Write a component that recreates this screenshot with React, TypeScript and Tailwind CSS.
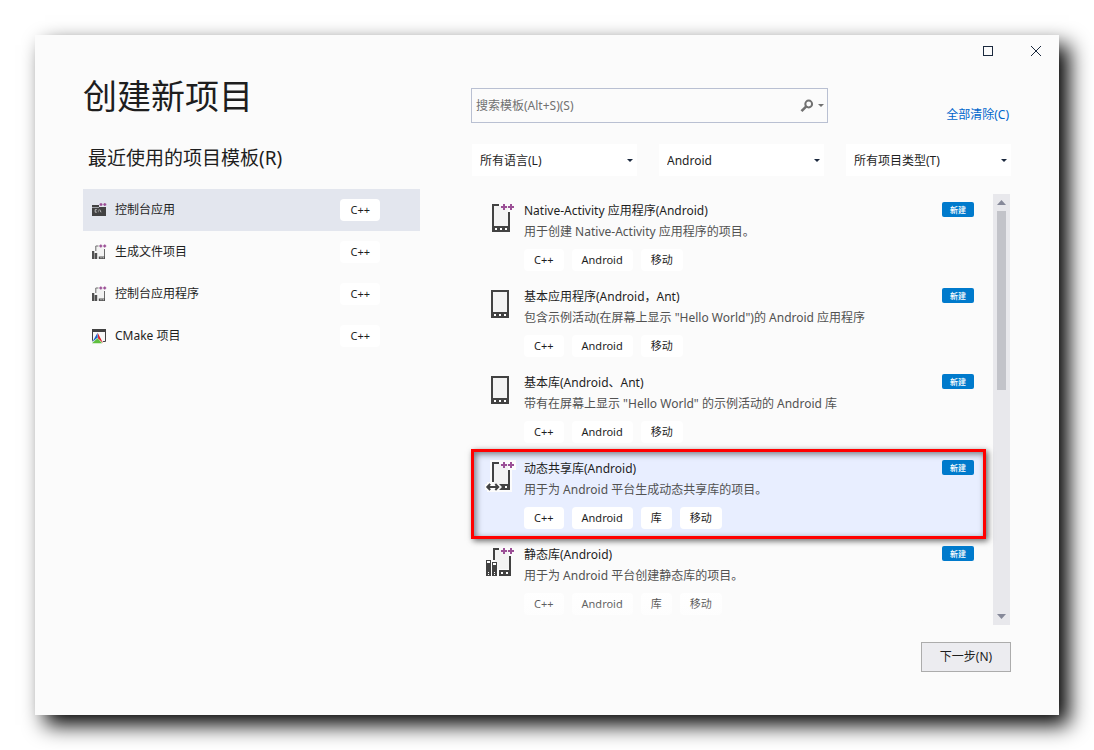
import React from "react";

type Kind = "native" | "phone" | "shared" | "static";

const recent = [
  { name: "控制台应用", icon: "console", selected: true },
  { name: "生成文件项目", icon: "makefile", selected: false },
  { name: "控制台应用程序", icon: "makefile", selected: false },
  { name: "CMake 项目", icon: "cmake", selected: false },
];

const templates: { title: string; desc: string; tags: string[]; kind: Kind; selected?: boolean }[] = [
  { title: "Native-Activity 应用程序(Android)", desc: "用于创建 Native-Activity 应用程序的项目。", tags: ["C++", "Android", "移动"], kind: "native" },
  { title: "基本应用程序(Android，Ant)", desc: "包含示例活动(在屏幕上显示 \"Hello World\")的 Android 应用程序", tags: ["C++", "Android", "移动"], kind: "phone" },
  { title: "基本库(Android、Ant)", desc: "带有在屏幕上显示 \"Hello World\" 的示例活动的 Android 库", tags: ["C++", "Android", "移动"], kind: "phone" },
  { title: "动态共享库(Android)", desc: "用于为 Android 平台生成动态共享库的项目。", tags: ["C++", "Android", "库", "移动"], kind: "shared", selected: true },
  { title: "静态库(Android)", desc: "用于为 Android 平台创建静态库的项目。", tags: ["C++", "Android", "库", "移动"], kind: "static" },
];

function PlusPlus() {
  return <path d="M16 6h2V4h2v2h2v2h-2v2h-2V8h-2zM23 6h2V4h2v2h2v2h-2v2h-2V8h-2z" fill="#9b4f96" />;
}

function TemplateIcon({ kind }: { kind: Kind }) {
  return (
    <svg width="32" height="34" viewBox="0 0 32 34" shapeRendering="crispEdges" aria-hidden="true" className="shrink-0">
      {kind === "phone" && (
        <>
          <path d="M6 4h18v28H6z" fill="#424242" />
          <path d="M8 6h14v20H8z" fill="#f3f3f3" />
          <path d="M9 28h2v2H9zM14 28h2v2h-2zM19 28h2v2h-2z" fill="#fff" />
        </>
      )}
      {kind === "native" && (
        <>
          <path d="M9 6h14v20H9z" fill="#f3f3f3" />
          <path d="M7 4h7v2H9v20h14V12h2v20H7z" fill="#424242" />
          <path d="M10 28h2v2h-2zM15 28h2v2h-2zM20 28h2v2h-2z" fill="#fff" />
          <PlusPlus />
        </>
      )}
      {kind === "shared" && (
        <>
          <path d="M5 2h26v10h-4v22H2v-2H0v-6h2v-2h3z" fill="#fcfcfc" />
          <path d="M9 6h14v20H9z" fill="#f3f3f3" />
          <path d="M7 4h7v2H9v18H7zM23 12h2v14h-2z" fill="#424242" />
          <g shapeRendering="geometricPrecision">
            <path d="M14 26h11v6H14l3-3z" fill="#424242" />
            <path d="M5.200 26L2.300 29l2.900 3M10.300 26l2.900 3-2.900 3M3 29h10" stroke="#424242" strokeWidth="2" fill="none" />
          </g>
          <path d="M20 28h2v2h-2z" fill="#fff" />
          <PlusPlus />
        </>
      )}
      {kind === "static" && (
        <>
          <path d="M10 6h14v19H10z" fill="#f3f3f3" />
          <path d="M8 4h6v2h-4v10H8zM24 12h2v20H14v-6h10z" fill="#424242" />
          <path d="M16 28h2v2h-2zM21 28h2v2h-2z" fill="#fff" />
          <path d="M1 16h5v16H1zM7 18h5v14H7z" fill="#424242" />
          <path d="M2 17h3v2H2zM8 19h3v2H8zM3 28h1v1H3zM9 28h1v1H9zM3 30h1v1H3zM9 30h1v1H9z" fill="#fff" />
          <PlusPlus />
        </>
      )}
    </svg>
  );
}

function SmallIcon({ name }: { name: string }) {
  return (
    <svg width="16" height="16" viewBox="0 0 16 16" aria-hidden="true" className="shrink-0">
      {name === "console" && (
        <>
          <path d="M1 3h7v2h7v9H1z" fill="#424242" />
          <path d="M1 5.500h7" stroke="#e3e6ee" strokeWidth=".6" />
          <path d="M5.800 7.600H4.200v2.600h1.600M7.300 7.800v.8M7.300 9.400v.8M8.700 7.500l1.300 2.800" stroke="#d8d8d8" strokeWidth=".8" fill="none" />
          <path d="M8.500 2.500h3M10 1v3M12.300 2.500h3M13.800 1v3" stroke="#9b4f96" strokeWidth="1.300" />
        </>
      )}
      {name === "makefile" && (
        <>
          <path d="M5 3h8v11H5z" fill="#f3f3f3" />
          <path d="M7.500 2H4.800v5M13.500 5v9.500" stroke="#6a6a6a" strokeWidth="1" fill="none" />
          <path d="M1 7h2.300v8H1zM3.700 9h2.500v6H3.700zM7.800 12.500H14V15H7.800z" fill="#505050" />
          <path d="M9.500 13.300h1v1h-1zM11.700 13.300h1v1h-1z" fill="#fff" />
          <path d="M8.300 2h3M9.800.5v3M12.200 2h3M13.700.5v3" stroke="#9b4f96" strokeWidth="1.300" />
        </>
      )}
      {name === "cmake" && (
        <>
          <path d="M1.500 1.500h13v12h-13z" fill="#f7f7f7" stroke="#424242" />
          <path d="M1 1h14v3H1z" fill="#424242" />
          <path d="M6.500 4L0 15.500h13z" fill="#fcfcfc" />
          <path d="M6.500 4.800L1.300 14l5.500-4.400z" fill="#1e64c8" />
          <path d="M6.700 4.800l.5 5.700 4.900 4.700z" fill="#d8232a" />
          <path d="M1 15.200l5.500-4.900 4.700 4.900z" fill="#5fbf3f" />
        </>
      )}
    </svg>
  );
}

function Tag({ children }: { children: React.ReactNode }) {
  return (
    <span className="flex h-[22px] items-center rounded-[4px] bg-white px-[10px] text-[11px] leading-4 text-[#1e1e1e]">
      {children}
    </span>
  );
}

function Caret({ className }: { className: string }) {
  return (
    <svg width="6" height="3" viewBox="0 0 6 3" aria-hidden="true" className={className}>
      <path d="M0 0h6L3 3z" fill="currentColor" />
    </svg>
  );
}

function Filter({ label, options }: { label: string; options: string[] }) {
  return (
    <div className="relative flex-1">
      <select aria-label={label} className="h-8 w-full appearance-none bg-white pt-[2px] pr-6 pl-2 text-[12px] text-[#1e1e1e] outline-none">
        {options.map((o) => (
          <option key={o}>{o}</option>
        ))}
      </select>
      <Caret className="pointer-events-none absolute top-[15px] right-1 text-[#1b293e]" />
    </div>
  );
}

export default function App() {
  return (
    <div className="flex min-h-screen bg-white p-[35px] font-['Noto_Sans','Noto_Sans_CJK_SC',sans-serif] text-[12px] text-[#1e1e1e]">
      <main className="flex flex-1 flex-col bg-[#fbfbfb] shadow-[10px_10px_20px_rgba(0,0,0,1)]">
        <header className="flex h-8 items-center justify-end gap-8 pr-[15px]">
          <button aria-label="最大化" className="flex size-4 items-center justify-center">
            <svg width="10" height="10" viewBox="0 0 10 10" shapeRendering="crispEdges">
              <path d="M.5.5h9v9h-9z" fill="none" stroke="#1b293e" />
            </svg>
          </button>
          <button aria-label="关闭" className="flex size-4 items-center justify-center">
            <svg width="10" height="10" viewBox="0 0 10 10">
              <path d="M0 0l10 10M10 0L0 10" stroke="#1b293e" strokeWidth="1" />
            </svg>
          </button>
        </header>

        <div className="grid grid-cols-[337fr_540fr] gap-[51px] pr-12 pl-12">
          <section>
            <h1 className="mt-[7px] text-[34px] leading-[44px]">创建新项目</h1>
            <h2 className="mt-[26px] pl-[5px] text-[19px] leading-7">最近使用的项目模板(R)</h2>
            <ul className="mt-[17px]">
              {recent.map((r) => (
                <li key={r.name}>
                  <button className={r.selected ? "flex h-[42px] w-full items-center bg-[#e3e6ee] pr-10 pl-2 text-left" : "flex h-[42px] w-full items-center pr-10 pl-2 text-left"}>
                    <SmallIcon name={r.icon} />
                    <span className="ml-2 flex-1">{r.name}</span>
                    <Tag>C++</Tag>
                  </button>
                </li>
              ))}
            </ul>
          </section>

          <section className="pt-[21px]">
            <div className="flex items-start justify-between pr-[2px]">
              <div className="flex h-[35px] w-[357px] items-center border border-[#b9c0d2] pr-[3px] pl-1">
                <input aria-label="搜索模板" placeholder="搜索模板(Alt+S)(S)" className="min-w-0 flex-1 bg-transparent outline-none placeholder:text-[#717171]" />
                <button aria-label="搜索" className="flex items-center gap-1 text-[#717171]">
                  <svg width="14" height="14" viewBox="0 0 14 14">
                    <circle cx="8.700" cy="5" r="3.400" fill="none" stroke="currentColor" strokeWidth="2" />
                    <path d="M6.300 7.400L1.500 12.200" stroke="currentColor" strokeWidth="2.600" />
                  </svg>
                  <Caret className="" />
                </button>
              </div>
              <a href="#clear" className="mt-[19px] leading-4 text-[#0066cc]">全部清除(C)</a>
            </div>

            <div className="mt-[21px] flex gap-[22px] pl-px">
              <Filter label="语言" options={["所有语言(L)"]} />
              <Filter label="平台" options={["Android"]} />
              <Filter label="项目类型" options={["所有项目类型(T)"]} />
            </div>

            <div className="relative mt-[18px] flex gap-[7px] pr-px">
              <ul className="flex-1">
                {templates.map((t) => (
                  <li
                    key={t.title}
                    className={t.selected ? "relative flex h-[86px] bg-[#e8eeff] pt-[6px] pr-3 pl-[14px]" : "relative flex h-[86px] pt-[6px] pr-3 pl-[14px]"}
                  >
                    <TemplateIcon kind={t.kind} />
                    <div className="ml-[7px] min-w-0 flex-1">
                      <div className="flex items-start justify-between pt-px">
                        <h3 className="leading-5">{t.title}</h3>
                        <span className="mt-px flex h-[15px] w-8 items-center justify-center rounded-[2px] bg-[#007acc] text-[8px] font-medium text-white">新建</span>
                      </div>
                      <p className="mt-px leading-5 text-[#525252]">{t.desc}</p>
                      <div className="mt-[7px] flex gap-2">
                        {t.tags.map((tag) => (
                          <Tag key={tag}>{tag}</Tag>
                        ))}
                      </div>
                    </div>
                    {t.selected && (
                      <div className="pointer-events-none absolute inset-x-0 -top-[3px] -bottom-px border-[3px] border-[#ff0000] shadow-[2px_2px_6px_rgba(0,0,0,0.6),inset_2px_2px_6px_rgba(0,0,0,0.5)]" />
                    )}
                  </li>
                ))}
              </ul>
              <div className="pointer-events-none absolute bottom-0 left-0 h-10 w-[515px] bg-linear-to-b from-[#fbfbfb]/0 to-[#fbfbfb]/60" />
              <div className="flex h-[431px] w-[17px] flex-col items-center bg-[#e8e8ec]">
                <button aria-label="向上滚动" className="flex h-[17px] w-full items-center justify-center">
                  <svg width="9" height="5" viewBox="0 0 9 5"><path d="M0 5h9L4.500 0z" fill="#868999" /></svg>
                </button>
                <div className="h-[179px] w-[9px] bg-[#c2c3c9]" />
                <button aria-label="向下滚动" className="mt-auto flex h-[17px] w-full items-center justify-center">
                  <svg width="9" height="5" viewBox="0 0 9 5"><path d="M0 0h9L4.500 5z" fill="#868999" /></svg>
                </button>
              </div>
            </div>

            <div className="mt-[17px] flex justify-end">
              <button className="h-[30px] w-[90px] border border-[#acacac] bg-[#ececf0]">下一步(N)</button>
            </div>
          </section>
        </div>
      </main>
    </div>
  );
}
